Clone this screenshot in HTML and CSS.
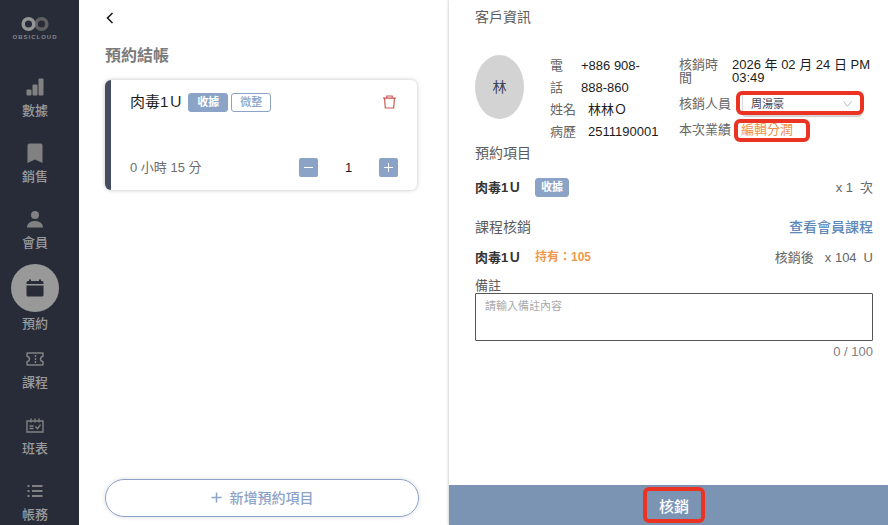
FILE: index.html
```
<!DOCTYPE html>
<html lang="zh-Hant">
<head>
    <meta charset="UTF-8">
    <meta name="viewport" content="width=device-width, initial-scale=1.0">
    <title>預約結帳</title>
    <link rel="stylesheet" href="styles.css">
</head>
<body>

<div class="app">
    <!-- 側邊選單 -->
    <nav class="sidebar">
        <div class="logo">
            <svg width="28" height="16" viewBox="0 0 28 16" fill="none" stroke-width="3.500">
                <circle cx="20.500" cy="8" r="5.300" stroke="#606060"/>
                <circle cx="7.500" cy="8" r="5.300" stroke="#959595"/>
            </svg>
            <span class="logo-text">OBSICLOUD</span>
        </div>
        <a class="nav-item" href="#">
            <span class="nav-icon">
                <svg width="18" height="18" viewBox="0 0 18 18" fill="currentColor">
                    <rect x="0.500" y="11.500" width="5" height="6" rx="1"/>
                    <rect x="6.500" y="6.500" width="5" height="11" rx="1"/>
                    <rect x="12.500" y="0.500" width="5" height="17" rx="1"/>
                </svg>
            </span>
            <span class="nav-label">數據</span>
        </a>
        <a class="nav-item" href="#">
            <span class="nav-icon">
                <svg width="16" height="20" viewBox="0 0 16 20" fill="currentColor">
                    <path d="M2.500 0.500h11a2 2 0 0 1 2 2V20L8 16.500 0.500 20V2.500a2 2 0 0 1 2-2z"/>
                </svg>
            </span>
            <span class="nav-label">銷售</span>
        </a>
        <a class="nav-item" href="#">
            <span class="nav-icon">
                <svg width="18" height="18" viewBox="0 0 18 18" fill="currentColor">
                    <circle cx="9" cy="5" r="4"/>
                    <path d="M1 17.500c0-4 3.500-6.500 8-6.500s8 2.500 8 6.500z"/>
                </svg>
            </span>
            <span class="nav-label">會員</span>
        </a>
        <a class="nav-item active" href="#">
            <span class="nav-icon">
                <svg width="18" height="18" viewBox="0 0 18 18" fill="currentColor">
                    <path d="M3 0.500h2V2h8V0.500h2V2h1a1.500 1.500 0 0 1 1.500 1.500V5H0.500V3.500A1.500 1.500 0 0 1 2 2h1z"/>
                    <path d="M0.500 6.500h17V16a1.500 1.500 0 0 1-1.500 1.500H2A1.500 1.500 0 0 1 0.500 16z"/>
                </svg>
            </span>
            <span class="nav-label">預約</span>
        </a>
        <a class="nav-item" href="#">
            <span class="nav-icon">
                <svg width="18" height="14" viewBox="0 0 18 14" fill="none" stroke="currentColor" stroke-width="1.500">
                    <path d="M1.500 1h15q.5 0 .5.500v2.700q-2.500.8-2.500 2.800t2.500 2.800v2.700q0 .5-.5.500h-15q-.5 0-.5-.5V9.800Q3.500 9 3.500 7T1 4.200V1.500q0-.5.5-.5z"/>
                    <path d="M9.500 3v2M9.500 6v2M9.500 9v2"/>
                </svg>
            </span>
            <span class="nav-label">課程</span>
        </a>
        <a class="nav-item" href="#">
            <span class="nav-icon">
                <svg width="18" height="15" viewBox="0 0 18 15" fill="none" stroke="currentColor" stroke-width="1.400">
                    <path d="M1 3h16v11H1zM5 0.500v4M9 0.500v4M13 0.500v4M3.500 8h4M3.500 10.500h4M9.500 8.500l2 2.200 3-4"/>
                </svg>
            </span>
            <span class="nav-label">班表</span>
        </a>
        <a class="nav-item" href="#">
            <span class="nav-icon">
                <svg width="16" height="14" viewBox="0 0 16 14" fill="none" stroke="currentColor" stroke-width="2">
                    <path d="M0.500 2h2M0.500 7h2M0.500 12h2M5 2h10.500M5 7h10.500M5 12h10.500"/>
                </svg>
            </span>
            <span class="nav-label">帳務</span>
        </a>
    </nav>

    <!-- 預約結帳 -->
    <main class="checkout">
        <button class="back-button" aria-label="返回">
            <svg width="8" height="12" viewBox="0 0 8 12" fill="none" stroke="#1c1c1c" stroke-width="1.600">
                <path d="M6.500 1L1.500 6l5 5"/>
            </svg>
        </button>
        <h1>預約結帳</h1>
        <div class="item-card">
            <div class="card-row">
                <span class="item-title">肉毒1Ｕ</span>
                <span class="tag">收據</span>
                <span class="tag tag-outline">微整</span>
                <button class="delete-button" aria-label="刪除">
                    <svg width="13" height="14" viewBox="0 0 13 14" fill="none" stroke="#cf5654" stroke-width="1.200">
                        <path d="M0 3.200h13M3.800 3V1h5.400v2M1.600 3.500l.7 9.500h8.400l.7-9.500"/>
                    </svg>
                </button>
            </div>
            <div class="card-row">
                <span class="duration">0 小時 15 分</span>
                <div class="stepper">
                    <button aria-label="減少">
                        <svg width="11" height="11" viewBox="0 0 11 11" stroke="#fff"><path d="M1 5.500h9"/></svg>
                    </button>
                    <span>1</span>
                    <button aria-label="增加">
                        <svg width="11" height="11" viewBox="0 0 11 11" stroke="#fff"><path d="M1 5.500h9M5.500 1v9"/></svg>
                    </button>
                </div>
            </div>
        </div>
        <button class="add-button">
            <svg width="11" height="11" viewBox="0 0 11 11" stroke="currentColor" stroke-width="1.500"><path d="M0.500 5.500h10M5.500 0.500v10"/></svg>
            新增預約項目
        </button>
    </main>

    <!-- 客戶資訊 -->
    <aside class="detail">
        <div class="detail-body">
            <h2>客戶資訊</h2>
            <div class="customer">
                <div class="avatar">林</div>
                <div class="contact">
                    <div class="contact-row"><span class="label label-narrow">電話</span><span class="phone">+886 908-888-860</span></div>
                    <div class="contact-row"><span class="label">姓名</span><span>林林Ｏ</span></div>
                    <div class="contact-row"><span class="label">病歷</span><span>2511190001</span></div>
                </div>
                <div class="redeem">
                    <div class="redeem-row redeem-time">
                        <span class="label">核銷時間</span>
                        <span>2026 年 02 月 24 日 PM 03:49</span>
                    </div>
                    <div class="redeem-row">
                        <label class="label" for="staff">核銷人員</label>
                        <div class="select-wrapper marked">
                            <select id="staff">
                                <option>周湯豪</option>
                            </select>
                            <svg class="chevron" width="9" height="6" viewBox="0 0 9 6" fill="none" stroke="#b5b5b5"><path d="M0.500 0.500l4 4.800 4-4.800"/></svg>
                        </div>
                    </div>
                    <div class="redeem-row">
                        <span class="label">本次業績</span>
                        <a class="profit-link marked" href="#">編輯分潤</a>
                    </div>
                </div>
            </div>

            <h2>預約項目</h2>
            <div class="line">
                <span class="line-name">肉毒1Ｕ</span>
                <span class="tag tag-small">收據</span>
                <span class="line-end"><span>x 1</span><span>次</span></span>
            </div>

            <div class="section-head">
                <h2>課程核銷</h2>
                <a class="course-link" href="#">查看會員課程</a>
            </div>
            <div class="line line-course">
                <span class="line-name">肉毒1Ｕ</span>
                <span class="owned">持有：105</span>
                <span class="line-end"><span class="after">核銷後</span><span>x 104</span><span>U</span></span>
            </div>

            <label class="note-label" for="note">備註</label>
            <textarea id="note" maxlength="100" placeholder="請輸入備註內容"></textarea>
            <div class="counter">0 / 100</div>
        </div>
        <div class="footer">
            <button class="redeem-button marked">核銷</button>
        </div>
    </aside>
</div>

</body>
</html>
```
FILE: styles.css
```
* {
    box-sizing: border-box;
}
body {
    margin: 0;
    font-family: "Liberation Sans", "Noto Sans CJK TC", sans-serif;
    font-size: 13px;
    color: #1c1c1c;
    background: #fff;
}
button, select, textarea {
    font-family: inherit;
    margin: 0;
    padding: 0;
}
button {
    border: none;
    background: none;
    cursor: pointer;
}
a {
    text-decoration: none;
}
svg {
    display: block;
    flex: none;
}
h1 {
    margin: 0;
    font-size: 16px;
    line-height: 24px;
    color: #7a7a7a;
}
h2 {
    margin: 0;
    font-size: 14px;
    line-height: 20px;
    font-weight: normal;
    color: #5c5c5c;
}
.app {
    display: grid;
    grid-template-columns: 79px 370fr 439fr;
    height: 100vh;
    overflow: hidden;
}

/* 側邊選單 */
.sidebar {
    display: flex;
    flex-direction: column;
    align-items: center;
    gap: 20px;
    padding: 16px 9px 0 0;
    background: #282c39;
    overflow: hidden;
}
.logo {
    display: flex;
    flex-direction: column;
    align-items: center;
    gap: 1px;
    height: 39px;
    flex: none;
}
.logo-text {
    font-size: 6px;
    line-height: 8px;
    font-weight: bold;
    letter-spacing: 1px;
    color: #85868a;
}
.nav-item {
    display: flex;
    flex-direction: column;
    align-items: center;
    gap: 2px;
    flex: none;
    color: #818181;
}
.nav-icon {
    display: flex;
    align-items: center;
    justify-content: center;
    width: 24px;
    height: 24px;
}
.nav-label {
    line-height: 20px;
    font-weight: 500;
    color: #9a9a9b;
}
.active {
    margin: -9px 0 -7px;
}
.active .nav-icon {
    width: 48px;
    height: 48px;
    border-radius: 50%;
    background: #999;
    color: #282c39;
}

/* 預約結帳 */
.checkout {
    display: flex;
    flex-direction: column;
    padding: 10px 30px 8px 26px;
}
.back-button {
    display: flex;
    align-items: center;
    align-self: flex-start;
    height: 16px;
    margin-bottom: 18px;
    padding-left: 1px;
}
.item-card {
    display: flex;
    flex-direction: column;
    justify-content: space-between;
    height: 110px;
    margin: 12px 2px 0 0;
    padding: 12px 19px 13px;
    border-left: 6px solid #454b60;
    border-radius: 6px;
    box-shadow: 0 0 4px rgba(0, 0, 0, 0.25);
}
.card-row {
    display: flex;
    align-items: center;
    gap: 3px;
    line-height: 19px;
}
.item-title {
    margin-right: 2px;
    font-size: 15px;
    line-height: 20px;
}
.tag {
    padding: 0 8px;
    border: 1px solid #8ba3c7;
    border-radius: 3px;
    background: #8ba3c7;
    font-size: 11px;
    line-height: 17px;
    font-weight: bold;
    color: #fff;
}
.tag-outline {
    background: #fff;
    font-weight: 500;
    color: #8ba3c7;
}
.tag-small {
    padding: 0 5px;
}
.delete-button {
    margin: 0 2px 0 auto;
}
.duration {
    color: #6e6e6e;
}
.stepper {
    display: flex;
    align-items: center;
    justify-content: space-between;
    width: 99px;
    margin-left: auto;
}
.stepper button {
    display: flex;
    align-items: center;
    justify-content: center;
    width: 19px;
    height: 19px;
    border-radius: 2px;
    background: #8ba3c7;
}
.add-button {
    display: flex;
    align-items: center;
    justify-content: center;
    gap: 8px;
    height: 38px;
    margin-top: auto;
    padding-bottom: 2px;
    border: 1px solid #8ba3c7;
    border-radius: 19px;
    box-shadow: 0 0 4px rgba(0, 0, 0, 0.15);
    font-size: 14px;
    font-weight: 500;
    color: #8ba3c7;
}

/* 客戶資訊 */
.detail {
    display: flex;
    flex-direction: column;
    justify-content: space-between;
    min-width: 0;
    box-shadow: 0 0 3px rgba(0, 0, 0, 0.3);
}
.detail-body {
    padding: 7px 15px 0 26px;
}
.customer {
    display: flex;
    margin-top: 28px;
}
.avatar {
    display: flex;
    align-items: center;
    justify-content: center;
    width: 49px;
    height: 64px;
    padding-bottom: 2px;
    flex: none;
    border-radius: 50%;
    background: #d3d3d3;
    font-size: 14px;
    color: #3d4257;
}
.label {
    color: #666;
}
.contact {
    width: 129px;
    height: 88px;
    margin-left: 26px;
    line-height: 22px;
    flex: none;
}
.contact-row {
    display: flex;
    gap: 12px;
}
.label-narrow {
    width: 19px;
    flex: none;
}
.phone {
    width: 70px;
}
.redeem {
    flex: 1;
    display: flex;
    flex-direction: column;
    gap: 4px;
}
.redeem-row {
    display: flex;
    align-items: center;
    line-height: 20px;
}
.redeem-row .label {
    width: 52px;
    flex: none;
}
.redeem-time {
    align-items: flex-start;
    padding: 3px 0 4px;
    line-height: 13px;
}
.redeem-time .label {
    width: 43px;
    margin-right: 10px;
}

/* 紅框標示 */
.marked {
    position: relative;
}
.marked::after {
    content: "";
    position: absolute;
    inset: -1px -2px 1px -6px;
    border: 4px solid #ea3323;
    border-radius: 6px;
    pointer-events: none;
}
.select-wrapper {
    flex: 1;
    margin: 0 11px;
}
.select-wrapper select {
    display: block;
    appearance: none;
    width: 100%;
    height: 24px;
    padding-left: 8px;
    border: 1px solid #d9d9d9;
    border-radius: 4px;
    background: #fff;
    box-shadow: 0 1px 1px #ccc;
    font-size: 11px;
    color: #3d4257;
}
.chevron {
    position: absolute;
    top: 9px;
    right: 10px;
}
.profit-link {
    margin-left: 10px;
    color: #ec9150;
}
.profit-link::after {
    inset: -1px -17px -2px -7px;
}

.line {
    display: flex;
    align-items: center;
    height: 20px;
    margin: 14px 0 20px;
    line-height: 19px;
}
.line-name {
    width: 60px;
    font-weight: bold;
    color: #333;
}
.owned {
    font-size: 12px;
    font-weight: bold;
    color: #f0994a;
}
.line-end {
    display: flex;
    gap: 7px;
    margin-left: auto;
    color: #666;
}
.after {
    margin-right: 4px;
}
.section-head {
    display: flex;
    justify-content: space-between;
}
.course-link {
    font-size: 14px;
    line-height: 20px;
    font-weight: 500;
    color: #6088b8;
}
.line-course {
    margin: 10px 0 12px;
}
.note-label {
    display: block;
    line-height: 14px;
    color: #5c5c5c;
}
textarea {
    display: block;
    width: 100%;
    height: 48px;
    border: 1px solid #555;
    border-radius: 1px;
    resize: none;
}
#note {
    padding: 4px 9px;
    font-size: 11px;
    line-height: 16px;
}
#note::placeholder {
    color: #aaa;
}
.counter {
    line-height: 22px;
    text-align: right;
    color: #808080;
}
.footer {
    display: flex;
    justify-content: center;
    height: 40px;
    padding: 2px 15px 2px 26px;
    background: #7b94b4;
}
.redeem-button {
    width: 62px;
    font-size: 15px;
    font-weight: 500;
    color: #fff;
}
.redeem-button::after {
    inset: 0;
}
```
